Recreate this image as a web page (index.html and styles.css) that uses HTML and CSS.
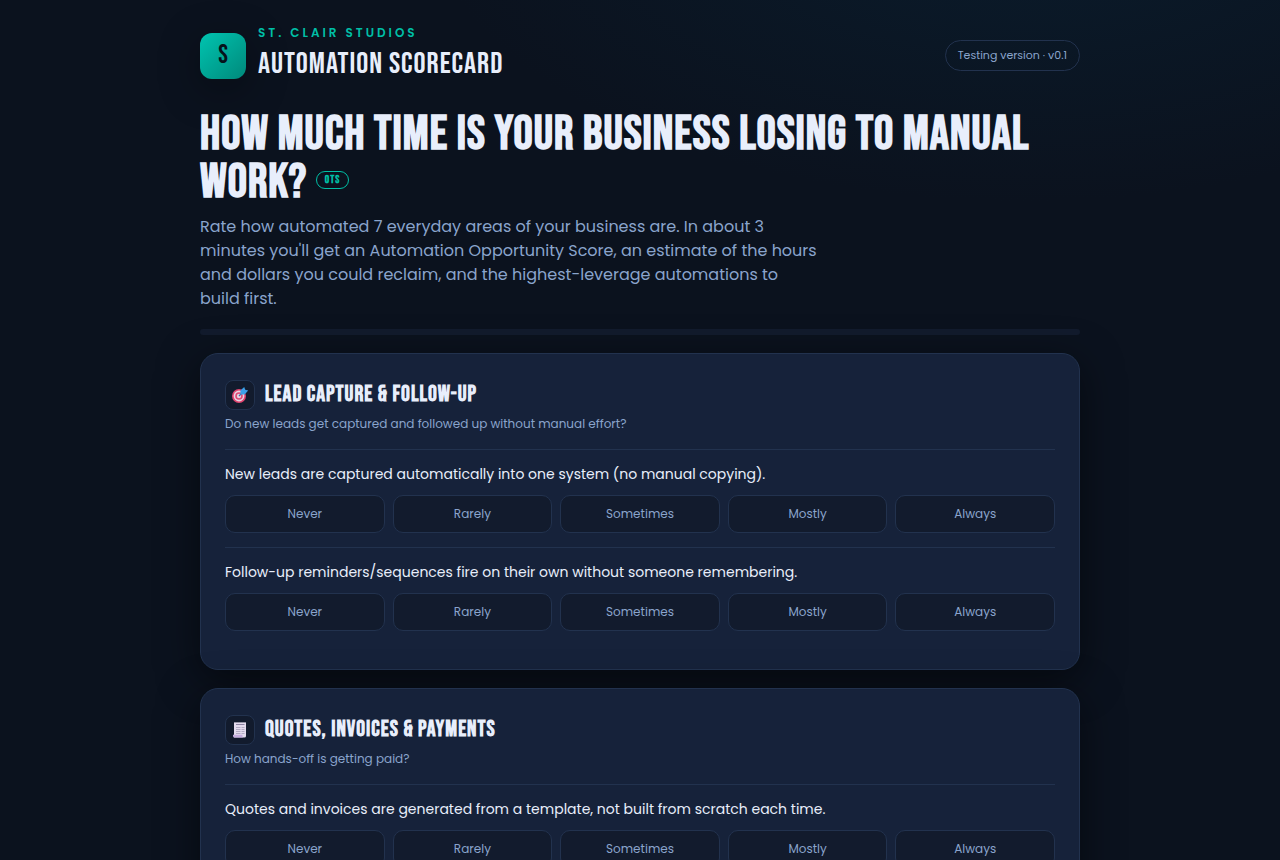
FILE: index.html
```
<!DOCTYPE html>
<html lang="en">
<head>
  <meta charset="UTF-8">
  <meta name="viewport" content="width=device-width, initial-scale=1.0">
  <title>Automation Scorecard</title>
  <link rel="stylesheet" href="styles.css">
</head>
<body>
  <div class="wrap">
    <header class="top">
      <div class="brand">
        <div class="mark">S</div>
        <div>
          <div class="eyebrow">St. Clair Studios</div>
          <div class="brand-name">Automation Scorecard</div>
        </div>
      </div>
      <span class="pill">Testing version · v0.1</span>
    </header>

    <main>
      <h1>How much time is your business losing to manual work? <span class="tag">OTS</span></h1>
      <p class="lede">Rate how automated 7 everyday areas of your business are. In about 3 minutes you'll get an Automation Opportunity Score, an estimate of the hours and dollars you could reclaim, and the highest-leverage automations to build first.</p>

      <div class="progress"></div>

      <section class="card">
        <div class="card-head">
          <span class="icon">
            <svg width="18" height="18" viewBox="0 0 18 18" aria-hidden="true">
              <circle cx="8" cy="10" r="7" fill="#e0446f"/>
              <circle cx="8" cy="10" r="5.4" fill="#e6d3e2"/>
              <circle cx="8" cy="10" r="3.8" fill="#dc4a74"/>
              <circle cx="8" cy="10" r="2.2" fill="#e6d3e2"/>
              <path d="M8 10l4-4" stroke="#3b6fa8" stroke-width="1.2"/>
              <path d="M9.4 8.4V4.6L13.2 1l1 2.8 3 .8-3.6 3.8z" fill="#3aa0e8"/>
            </svg>
          </span>
          <h2>Lead Capture &amp; Follow-Up</h2>
        </div>
        <p class="hint">Do new leads get captured and followed up without manual effort?</p>
        <div class="question">
          <p class="q-text" id="q1">New leads are captured automatically into one system (no manual copying).</p>
          <div class="options" role="group" aria-labelledby="q1">
            <button type="button">Never</button>
            <button type="button">Rarely</button>
            <button type="button">Sometimes</button>
            <button type="button">Mostly</button>
            <button type="button">Always</button>
          </div>
        </div>
        <div class="question">
          <p class="q-text" id="q2">Follow-up reminders/sequences fire on their own without someone remembering.</p>
          <div class="options" role="group" aria-labelledby="q2">
            <button type="button">Never</button>
            <button type="button">Rarely</button>
            <button type="button">Sometimes</button>
            <button type="button">Mostly</button>
            <button type="button">Always</button>
          </div>
        </div>
      </section>

      <section class="card">
        <div class="card-head">
          <span class="icon">
            <svg width="18" height="18" viewBox="0 0 18 18" aria-hidden="true">
              <path d="M3 1l1 .8L5 1l1 .8L7 1l1 .8L9 1l1 .8 1-.8 1 .8 1-.8 1 .8 1-.8v14a1.500 1.500 0 0 1-1.500 1.500H3z" fill="#e4dcee"/>
              <path d="M2 13.800h9.400v1.400a1.300 1.300 0 0 0 1.300 1.300H3.500A1.500 1.500 0 0 1 2 15z" fill="#c6aee0"/>
              <path d="M5 3.500h8.500" stroke="#8d84a3"/>
              <path d="M5 6.500h4.500M10.500 6.500h3M5 8.500h4.500M10.500 8.500h3M5 10.500h4.500M10.500 10.500h3M5 12.500h4.500M10.500 12.500h3" stroke="#b3abc4"/>
            </svg>
          </span>
          <h2>Quotes, Invoices &amp; Payments</h2>
        </div>
        <p class="hint">How hands-off is getting paid?</p>
        <div class="question">
          <p class="q-text" id="q3">Quotes and invoices are generated from a template, not built from scratch each time.</p>
          <div class="options" role="group" aria-labelledby="q3">
            <button type="button">Never</button>
            <button type="button">Rarely</button>
            <button type="button">Sometimes</button>
            <button type="button">Mostly</button>
            <button type="button">Always</button>
          </div>
        </div>
      </section>
    </main>
  </div>
</body>
</html>
```

FILE: styles.css
```
:root {
  --bg: #0b121e;
  --card: #16223a;
  --field: #121b2d;
  --line: #22324e;
  --text: #e8eefb;
  --muted: #8aa4cc;
  --teal: #00bfa6;
  --display: "Bebas Neue", "Liberation Sans Narrow", "Liberation Sans", sans-serif;
  --sans: "Poppins", "Inter", "Liberation Sans", sans-serif;
}

* {
  box-sizing: border-box;
  margin: 0;
  padding: 0;
}

body {
  background: radial-gradient(1000px 500px at 80% -10%, #0a1c2c, transparent 60%), var(--bg);
  color: var(--text);
  font-family: var(--sans);
  font-size: 16px;
  line-height: 24px;
}

.wrap {
  max-width: 920px;
  margin: 0 auto;
  padding: 24px 20px 60px;
}

.top,
.brand,
.card-head {
  display: flex;
  align-items: center;
}

.top {
  justify-content: space-between;
  margin-bottom: 24px;
}

.brand {
  gap: 12px;
}

.mark {
  width: 46px;
  height: 46px;
  border-radius: 12px;
  background: linear-gradient(135deg, #00c4b0, #00897b);
  box-shadow: 0 10px 40px rgba(0, 0, 0, 0.35);
  color: #06121a;
  font-family: var(--display);
  font-size: 26px;
  line-height: 46px;
  text-align: center;
}

.eyebrow {
  color: var(--teal);
  font-size: 12px;
  font-weight: 600;
  letter-spacing: 3px;
  line-height: 18px;
  text-transform: uppercase;
}

.brand-name {
  font-family: var(--display);
  font-size: 30px;
  letter-spacing: 1px;
  line-height: 45px;
  text-transform: uppercase;
}

.pill {
  padding: 6px 12px;
  border: 1px solid var(--line);
  border-radius: 999px;
  color: var(--muted);
  font-size: 11px;
  line-height: 17px;
}

h1 {
  font-family: var(--display);
  font-size: 48px;
  letter-spacing: 1px;
  line-height: 48px;
  text-transform: uppercase;
}

.tag {
  display: inline-block;
  padding: 0 8px;
  border: 1px solid var(--teal);
  border-radius: 999px;
  color: var(--teal);
  font-size: 11px;
  line-height: 16px;
  vertical-align: middle;
}

.lede {
  max-width: 620px;
  margin-top: 8px;
  color: var(--muted);
}

.progress {
  height: 6px;
  margin: 18px 0;
  border-radius: 999px;
  background: var(--field);
}

.card {
  margin-bottom: 18px;
  padding: 24px;
  border: 1px solid var(--line);
  border-radius: 18px;
  background: var(--card);
  box-shadow: 0 10px 40px rgba(0, 0, 0, 0.5);
}

.card-head {
  gap: 10px;
}

.icon {
  display: flex;
  align-items: center;
  justify-content: center;
  width: 30px;
  height: 30px;
  border: 1px solid var(--line);
  border-radius: 8px;
  background: var(--field);
}

h2 {
  font-family: var(--display);
  font-size: 22px;
  letter-spacing: 1px;
  line-height: 34px;
  text-transform: uppercase;
}

.hint {
  margin: 2px 0 15px;
  color: var(--muted);
  font-size: 12px;
  line-height: 20px;
}

.question {
  padding: 14px 0;
  border-top: 1px solid var(--line);
}

.q-text {
  margin-bottom: 10px;
  font-size: 14px;
  line-height: 21px;
}

.options {
  display: grid;
  grid-template-columns: repeat(5, 1fr);
  gap: 8px;
}

.options button {
  height: 38px;
  border: 1px solid var(--line);
  border-radius: 10px;
  background: var(--field);
  color: var(--muted);
  font-family: inherit;
  font-size: 12px;
  cursor: pointer;
}

.options button:hover {
  border-color: var(--teal);
}
```
